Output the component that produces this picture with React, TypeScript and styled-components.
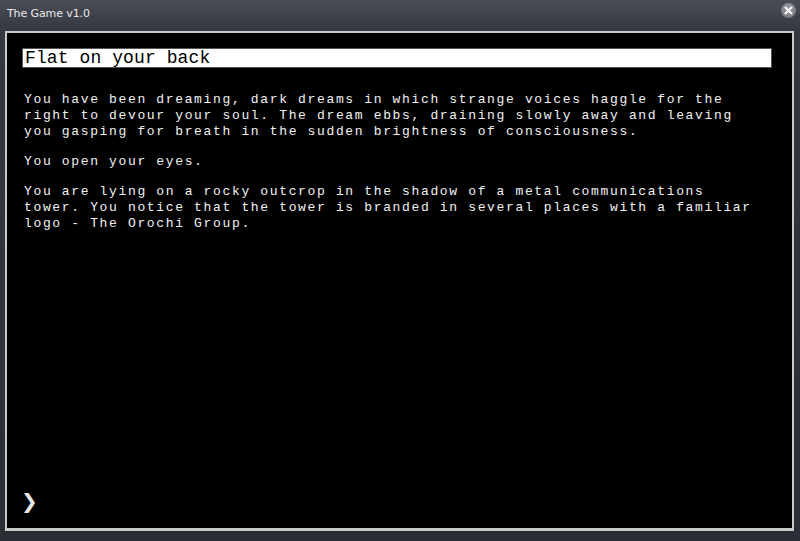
import React from "react";
import styled, { createGlobalStyle } from "styled-components";

const Global = createGlobalStyle`
  html, body { margin: 0; padding: 0; background: #2b2e35; }
  #root { width: 800px; height: 541px; }
`;

const Window = styled.div`
  width: 800px;
  height: 541px;
  display: flex;
  flex-direction: column;
  background: linear-gradient(180deg, #4a4d55 0px, #34373e 32px, #2a2d33 100%);
  box-sizing: border-box;
  overflow: hidden;
`;

const TitleBar = styled.div`
  height: 31px;
  display: flex;
  align-items: flex-start;
  justify-content: space-between;
  padding: 6px 4px 0 7px;
  box-sizing: border-box;
  flex-shrink: 0;
`;

const Title = styled.div`
  font-family: "DejaVu Sans", sans-serif;
  font-size: 11px;
  color: #e8e8ea;
  letter-spacing: -0.1px;
  line-height: 15px;
`;

const CloseButton = styled.div`
  width: 15px;
  height: 15px;
  margin-top: -3px;
  border-radius: 50%;
  background: radial-gradient(circle at 50% 35%, #9a9ca2, #6d7077);
  display: flex;
  align-items: center;
  justify-content: center;
`;

const Frame = styled.div`
  flex: 1;
  margin: 0 6px 10px 5px;
  border: 2px solid #c9c9c9;
  border-bottom-width: 3px;
  background: #000;
  display: flex;
  flex-direction: column;
  padding: 15px 20px 17px 15px;
  box-sizing: border-box;
`;

const Heading = styled.div`
  height: 20px;
  background: #fff;
  border: 1px solid #555;
  box-sizing: border-box;
  font-family: "Liberation Mono", monospace;
  font-size: 18px;
  line-height: 18px;
  color: #000;
  padding-left: 2px;
  letter-spacing: 0.1px;
  white-space: pre;
`;

const Story = styled.div`
  flex: 1;
  margin-top: 24px;
  padding-left: 2px;
`;

const Para = styled.p`
  margin: 0 0 14px 0;
  font-family: "Liberation Mono", monospace;
  font-size: 13px;
  letter-spacing: 1.65px;
  line-height: 16px;
  color: #f2f2f2;
  white-space: pre;
`;

const Prompt = styled.div`
  font-family: "DejaVu Sans", sans-serif;
  font-weight: bold;
  font-size: 20px;
  line-height: 20px;
  color: #e8e8e8;
  margin-left: -1px;
`;

export default function App() {
  return (
    <>
      <Global />
      <Window>
        <TitleBar>
          <Title>The Game v1.0</Title>
          <CloseButton>
            <svg width="9" height="9" viewBox="0 0 9 9">
              <path d="M1.5 1.5 L7.5 7.5 M7.5 1.5 L1.5 7.5" stroke="#fff" strokeWidth="2" strokeLinecap="round" />
            </svg>
          </CloseButton>
        </TitleBar>
        <Frame>
          <Heading>Flat on your back</Heading>
          <Story>
            <Para>{"You have been dreaming, dark dreams in which strange voices haggle for the\nright to devour your soul. The dream ebbs, draining slowly away and leaving\nyou gasping for breath in the sudden brightness of consciousness."}</Para>
            <Para>You open your eyes.</Para>
            <Para>{"You are lying on a rocky outcrop in the shadow of a metal communications\ntower. You notice that the tower is branded in several places with a familiar\nlogo - The Orochi Group."}</Para>
          </Story>
          <Prompt>❯</Prompt>
        </Frame>
      </Window>
    </>
  );
}
